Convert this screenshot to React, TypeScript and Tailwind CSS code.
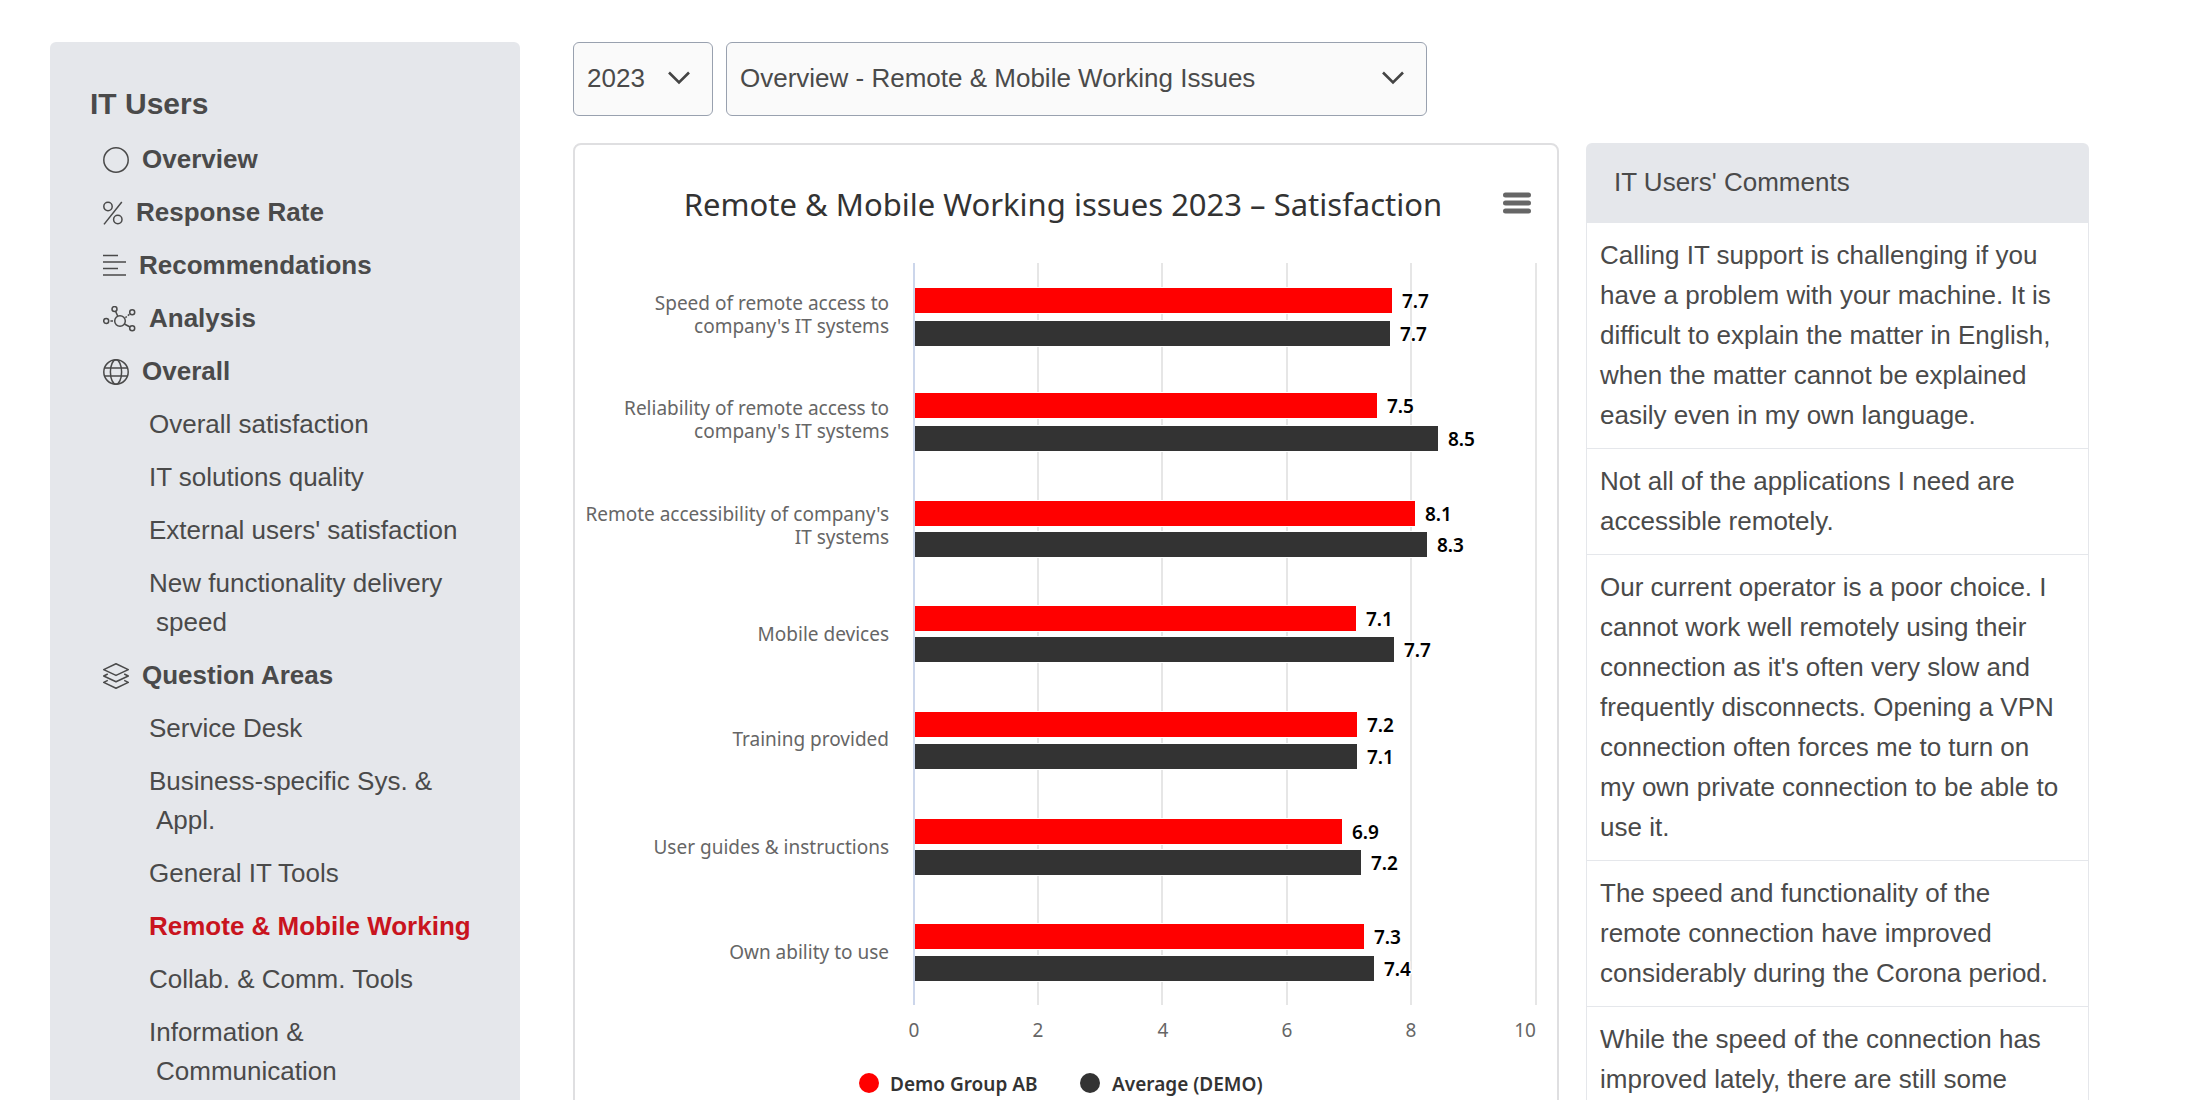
import type { ReactNode } from 'react';

interface NavLink {
  label: string;
  active?: boolean;
}

interface NavSection {
  label: string;
  icon: ReactNode;
  links?: NavLink[];
}

const iconProps = {
  height: 26,
  fill: 'none',
  stroke: 'currentColor',
  strokeWidth: 1.5,
  className: 'shrink-0',
  'aria-hidden': true,
};

const CircleIcon = () => (
  <svg {...iconProps} width="26" viewBox="0 0 26 26">
    <circle cx="13" cy="13" r="12.2" />
  </svg>
);

const PercentIcon = () => (
  <svg {...iconProps} width="20" viewBox="0 0 20 26">
    <circle cx="5" cy="6.5" r="4.2" />
    <circle cx="14.8" cy="19.5" r="4.2" />
    <path d="M18.8 2 1 24.4" />
  </svg>
);

const LinesIcon = () => (
  <svg {...iconProps} width="23" viewBox="0 0 23 26" strokeWidth="1.7">
    <path d="M0 2.5h15M0 9h23M0 15.5h15M0 22h23" />
  </svg>
);

const NodesIcon = () => (
  <svg {...iconProps} width="33" viewBox="0 0 33 26">
    <circle cx="17" cy="15" r="5.3" />
    <circle cx="3.2" cy="15" r="2.5" />
    <circle cx="11.5" cy="3" r="2.5" />
    <circle cx="29.2" cy="6.2" r="2.5" />
    <circle cx="29.2" cy="22.3" r="2.5" />
    <path d="m12.6 5.4 2.2 4.8M21.4 18l5.6 3M7.4 15h2.6M22.4 11.6l1.4-1.1M24.8 9.6l1.6-1.2" />
  </svg>
);

const GlobeIcon = () => (
  <svg {...iconProps} width="26" viewBox="0 0 26 26">
    <circle cx="13" cy="13" r="12.2" />
    <ellipse cx="13" cy="13" rx="5.6" ry="12.2" />
    <path d="M1.4 9h23.2M1.4 17h23.2" />
  </svg>
);

const LayersIcon = () => (
  <svg {...iconProps} width="26" viewBox="0 0 26 26" strokeLinejoin="round">
    <path d="M13 .8 25.3 6.6 13 12.4.7 6.6z" />
    <path d="M4.8 11 .7 13 13 18.8 25.3 13l-4.1-2" />
    <path d="M4.8 17.4.7 19.4 13 25.2l12.3-5.8-4.1-2" />
  </svg>
);

const sections: NavSection[] = [
  { label: 'Overview', icon: <CircleIcon /> },
  { label: 'Response Rate', icon: <PercentIcon /> },
  { label: 'Recommendations', icon: <LinesIcon /> },
  { label: 'Analysis', icon: <NodesIcon /> },
  {
    label: 'Overall',
    icon: <GlobeIcon />,
    links: [
      { label: 'Overall satisfaction' },
      { label: 'IT solutions quality' },
      { label: "External users' satisfaction" },
      { label: 'New functionality delivery speed' },
    ],
  },
  {
    label: 'Question Areas',
    icon: <LayersIcon />,
    links: [
      { label: 'Service Desk' },
      { label: 'Business-specific Sys. & Appl.' },
      { label: 'General IT Tools' },
      { label: 'Remote & Mobile Working', active: true },
      { label: 'Collab. & Comm. Tools' },
      { label: 'Information & Communication' },
    ],
  },
];

const comments = [
  'Calling IT support is challenging if you have a problem with your machine. It is difficult to explain the matter in English, when the matter cannot be explained easily even in my own language.',
  'Not all of the applications I need are accessible remotely.',
  "Our current operator is a poor choice. I cannot work well remotely using their connection as it's often very slow and frequently disconnects. Opening a VPN connection often forces me to turn on my own private connection to be able to use it.",
  'The speed and functionality of the remote connection have improved considerably during the Corona period.',
  'While the speed of the connection has improved lately, there are still some',
];

// y is the top of the bar, end is its right edge
const rows = [
  { lines: ['Speed of remote access to', "company's IT systems"], text: 165, group: { y: 143, end: 817, value: '7.7' }, average: { y: 176, end: 815, value: '7.7' } },
  { lines: ['Reliability of remote access to', "company's IT systems"], text: 270, group: { y: 248, end: 802, value: '7.5' }, average: { y: 281, end: 863, value: '8.5' } },
  { lines: ["Remote accessibility of company's", 'IT systems'], text: 376, group: { y: 356, end: 840, value: '8.1' }, average: { y: 387, end: 852, value: '8.3' } },
  { lines: ['Mobile devices'], text: 496, group: { y: 461, end: 781, value: '7.1' }, average: { y: 492, end: 819, value: '7.7' } },
  { lines: ['Training provided'], text: 601, group: { y: 567, end: 782, value: '7.2' }, average: { y: 599, end: 782, value: '7.1' } },
  { lines: ['User guides & instructions'], text: 709, group: { y: 674, end: 767, value: '6.9' }, average: { y: 705, end: 786, value: '7.2' } },
  { lines: ['Own ability to use'], text: 814, group: { y: 779, end: 789, value: '7.3' }, average: { y: 811, end: 799, value: '7.4' } },
];

const gridLines = [463, 587, 712, 836, 961];

const ticks = [
  { x: 339, label: '0' },
  { x: 463, label: '2' },
  { x: 588, label: '4' },
  { x: 712, label: '6' },
  { x: 836, label: '8' },
  { x: 950, label: '10' },
];

interface BarProps {
  y: number;
  end: number;
  value: string;
  color: string;
}

const Bar = ({ y, end, value, color }: BarProps) => (
  <g>
    <rect x="339" y={y - 1} width={end - 338} height="27" fill="#fff" />
    <rect x="340" y={y} width={end - 340} height="25" fill={color} />
    <text
      x={end + 10}
      y={y + 20}
      className="text-[19px] font-semibold"
      fill="#000"
      stroke="#fff"
      strokeWidth="3"
      strokeLinejoin="round"
      paintOrder="stroke"
    >
      {value}
    </text>
  </g>
);

const SatisfactionChart = () => (
  <svg viewBox="0 0 982 980" className="block w-full font-['Noto_Sans',sans-serif]" role="img" aria-label="Satisfaction chart">
    <text x="488" y="71" textAnchor="middle" className="text-[31px]" fill="#333">
      Remote &amp; Mobile Working issues 2023 – Satisfaction
    </text>
    {gridLines.map((x) => (
      <path key={x} d={`M${x} 118V860`} stroke="#e6e6e6" strokeWidth="2" />
    ))}
    {rows.map((row) => (
      <g key={row.lines[0]}>
        {row.lines.map((line, i) => (
          <text key={line} x="314" y={row.text + i * 23} textAnchor="end" className="text-[19px]" fill="#666">
            {line}
          </text>
        ))}
        <Bar {...row.group} color="#ff0000" />
        <Bar {...row.average} color="#333333" />
      </g>
    ))}
    <path d="M339 118V860" stroke="#ccd6eb" strokeWidth="2" />
    {ticks.map((tick) => (
      <text key={tick.label} x={tick.x} y="892" textAnchor="middle" className="text-[19px]" fill="#666">
        {tick.label}
      </text>
    ))}
    <circle cx="294" cy="938" r="10" fill="#ff0000" />
    <text x="315" y="946" className="text-[19px] font-semibold" fill="#333">
      Demo Group AB
    </text>
    <circle cx="515" cy="938" r="10" fill="#333" />
    <text x="537" y="946" className="text-[19px] font-semibold" fill="#333">
      Average (DEMO)
    </text>
  </svg>
);

const Sidebar = () => (
  <nav className="w-[470px] shrink-0 rounded-t-md bg-gray-200 pt-[42px] pr-9">
    <h2 className="mb-[10px] pl-10 text-[30px] leading-[39px] font-bold">IT Users</h2>
    <ul>
      {sections.map((section) => (
        <li key={section.label}>
          <a href="#" className="flex items-center gap-[13px] py-[7px] pl-[53px] font-bold">
            {section.icon}
            {section.label}
          </a>
          {section.links && (
            <ul>
              {section.links.map((link) => (
                <li key={link.label} className="py-[7px] pl-[106px] -indent-[7px]">
                  <a href="#" className={link.active ? 'font-bold text-[#c9141e]' : ''}>
                    {link.label}
                  </a>
                </li>
              ))}
            </ul>
          )}
        </li>
      ))}
    </ul>
  </nav>
);

interface PickerProps {
  label: string;
  option: string;
  className: string;
}

const Picker = ({ label, option, className }: PickerProps) => (
  <div className={`relative ${className}`}>
    <select
      aria-label={label}
      className="h-[74px] w-full appearance-none rounded-md border border-gray-400 bg-neutral-50 pb-0.5 pl-[13px]"
    >
      <option>{option}</option>
    </select>
    <svg
      width="22"
      height="14"
      viewBox="0 0 22 14"
      fill="none"
      stroke="#444"
      strokeWidth="2.6"
      className="pointer-events-none absolute top-[29px] right-[23px]"
      aria-hidden
    >
      <path d="m1 1.5 10 10 10-10" />
    </svg>
  </div>
);

const App = () => {
  return (
    <div className="flex h-screen gap-[53px] overflow-hidden bg-white pt-[42px] pr-[111px] pl-[50px] font-['Liberation_Sans',Arial,sans-serif] text-[26px] leading-[39px] text-[#4a4a4a]">
      <Sidebar />
      <main className="min-w-0 flex-1">
        <div className="flex gap-[13px]">
          <Picker label="Year" option="2023" className="w-[140px]" />
          <Picker label="View" option="Overview - Remote & Mobile Working Issues" className="w-[701px]" />
        </div>
        <div className="mt-[27px] flex gap-[27px]">
          <section className="relative flex-1 rounded-lg border-2 border-[#dfdfe1]">
            <SatisfactionChart />
            <button aria-label="Chart menu" className="absolute top-10 right-[22px] p-1">
              <svg width="28" height="28" viewBox="0 0 28 28" stroke="#666" strokeWidth="5" strokeLinecap="round">
                <path d="M2.5 6h23M2.5 14h23M2.5 22h23" />
              </svg>
            </button>
          </section>
          <section className="w-[503px] shrink-0">
            <h3 className="rounded-t-md bg-gray-200 px-7 pt-5 pb-[21px]">IT Users' Comments</h3>
            <ul className="border-x border-gray-200 leading-10">
              {comments.map((comment) => (
                <li key={comment} className="border-b border-gray-200 pt-3 pr-5 pb-[13px] pl-[13px]">
                  {comment}
                </li>
              ))}
            </ul>
          </section>
        </div>
      </main>
    </div>
  );
};

export default App;
